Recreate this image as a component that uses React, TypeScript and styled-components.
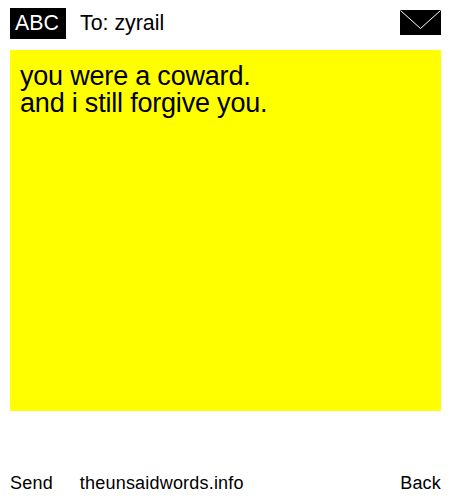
import styled, { createGlobalStyle } from "styled-components";

const GlobalStyle = createGlobalStyle`
  html, body {
    margin: 0;
    padding: 0;
    background: #fff;
  }
  body {
    font-family: "Liberation Sans", Arial, sans-serif;
    color: #000;
  }
`;

const Page = styled.div`
  width: 450px;
  height: 500px;
  box-sizing: border-box;
  padding: 8px 9px 0 10px;
  display: flex;
  flex-direction: column;
  overflow: hidden;
`;

const Header = styled.header`
  height: 31px;
  display: flex;
  align-items: center;
`;

const Mode = styled.div`
  width: 56px;
  height: 31px;
  box-sizing: border-box;
  padding-right: 2px;
  background: #000;
  color: #fff;
  font-size: 21.33px;
  line-height: 30px;
  text-align: center;
`;

const Recipient = styled.div`
  margin-left: 14px;
  font-size: 21.33px;
  line-height: 31px;
  flex: 1;
`;

const Envelope = styled.svg`
  display: block;
  width: 41px;
  height: 25px;
  margin-top: -2px;
`;

const Note = styled.div`
  margin-top: 11px;
  height: 361px;
  box-sizing: border-box;
  padding: 13px 10px;
  background: #ff0;
  font-size: 27px;
  letter-spacing: -0.2px;
  line-height: 27px;
`;

const Footer = styled.footer`
  margin-top: 62px;
  display: flex;
  font-size: 18px;
  letter-spacing: 0.2px;
  line-height: 21px;
`;

const FooterLink = styled.a`
  color: #000;
  text-decoration: none;
`;

const SiteLink = styled(FooterLink)`
  margin-left: 27px;
  flex: 1;
`;

export default function App() {
  return (
    <>
      <GlobalStyle />
      <Page>
        <Header>
          <Mode>ABC</Mode>
          <Recipient>To: zyrail</Recipient>
          <Envelope viewBox="0 0 41 25" aria-hidden="true">
            <rect width="41" height="25" fill="#000" />
            <path d="M0.5 0.5L20.5 18.5L40.5 0.5" fill="none" stroke="#fff" strokeWidth="1" />
          </Envelope>
        </Header>
        <Note>
          you were a coward.
          <br />
          and i still forgive you.
        </Note>
        <Footer>
          <FooterLink href="#">Send</FooterLink>
          <SiteLink href="#">theunsaidwords.info</SiteLink>
          <FooterLink href="#">Back</FooterLink>
        </Footer>
      </Page>
    </>
  );
}
